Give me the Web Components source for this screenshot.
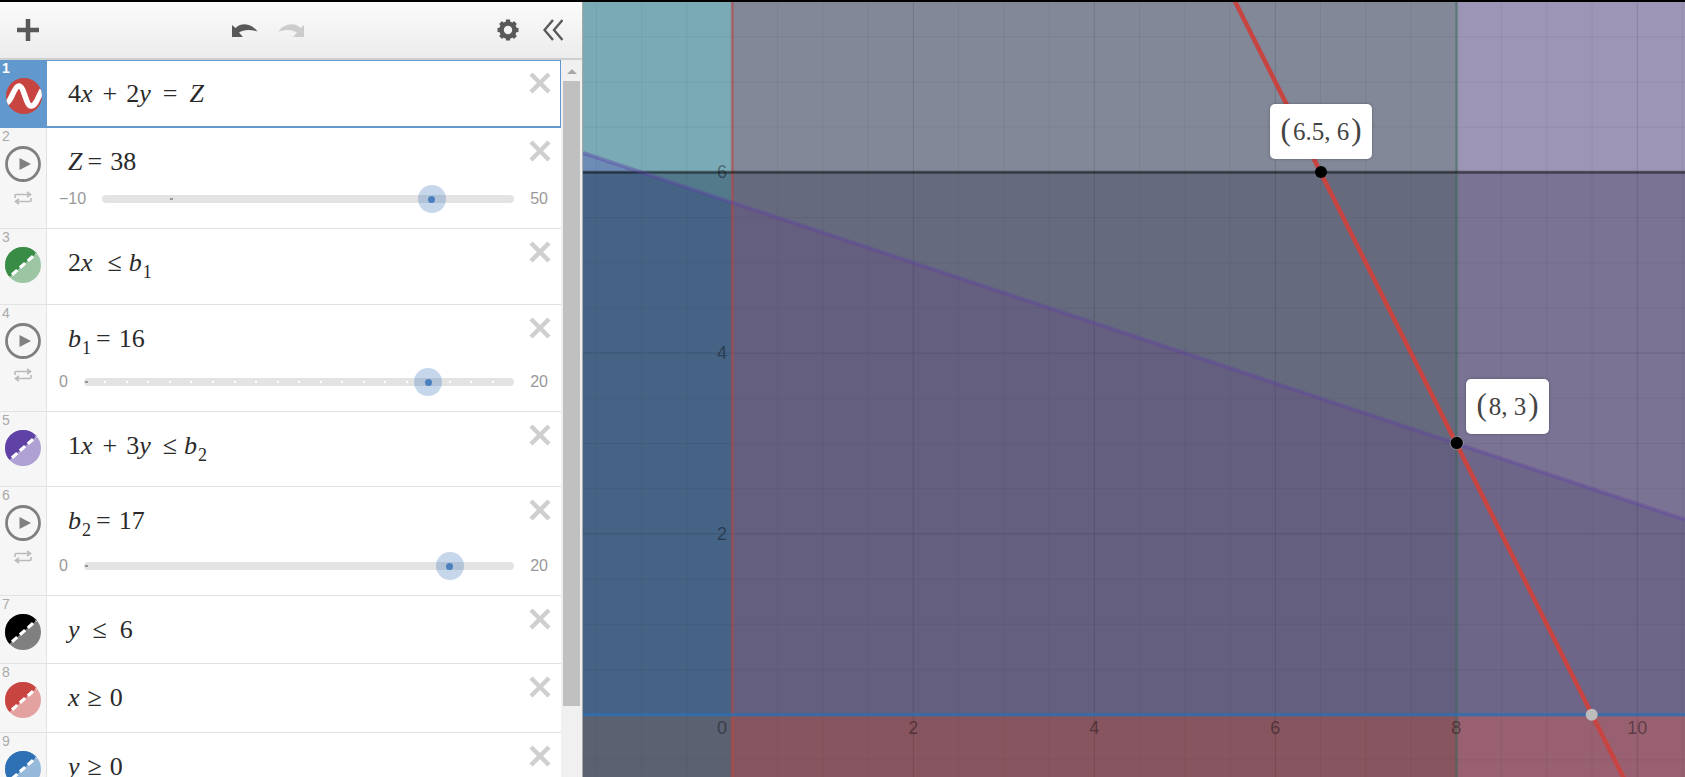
<!DOCTYPE html>
<html lang="en">
<head>
<meta charset="utf-8">
<title>Graph</title>
<style>
  html, body { margin: 0; height: 100%; overflow: hidden; background: #fff; }
</style>
</head>
<body>
<calc-app>
  <calc-toolbar slot="toolbar"></calc-toolbar>
  <calc-expression slot="rows" index="1" icon="wave" color="#c74440" h="68" active>4<i>x</i><span style="margin:0 9px 0 10px">+</span>2<i>y</i><span style="margin:0 12px">=</span><i>Z</i></calc-expression>
  <calc-expression slot="rows" index="2" icon="play" h="101"><i>Z</i><span style="margin:0 8px 0 5px">=</span>38
    <calc-slider slot="slider" min="-10" max="50" value="38"></calc-slider></calc-expression>
  <calc-expression slot="rows" index="3" icon="shade" color="#388c46" light="#9cc6a3" h="76">2<i>x</i><span style="margin:0 7px 0 15px">≤</span><i>b</i><sub>1</sub></calc-expression>
  <calc-expression slot="rows" index="4" icon="play" h="107"><i>b</i><sub>1</sub><span style="margin:0 8px 0 5px">=</span>16
    <calc-slider slot="slider" min="0" max="20" value="16" step="1"></calc-slider></calc-expression>
  <calc-expression slot="rows" index="5" icon="shade" color="#6042a6" light="#afa1d3" h="75">1<i>x</i><span style="margin:0 9px 0 10px">+</span>3<i>y</i><span style="margin:0 7px 0 12px">≤</span><i>b</i><sub>2</sub></calc-expression>
  <calc-expression slot="rows" index="6" icon="play" h="109"><i>b</i><sub>2</sub><span style="margin:0 8px 0 5px">=</span>17
    <calc-slider slot="slider" min="0" max="20" value="17"></calc-slider></calc-expression>
  <calc-expression slot="rows" index="7" icon="shade" color="#000000" light="#808080" h="68"><i>y</i><span style="margin:0 13px">≤</span>6</calc-expression>
  <calc-expression slot="rows" index="8" icon="shade" color="#c74440" light="#e3a2a0" h="69"><i>x</i><span style="margin:0 8px">≥</span>0</calc-expression>
  <calc-expression slot="rows" index="9" icon="shade" color="#2d70b3" light="#96b8d9" h="69"><i>y</i><span style="margin:0 8px">≥</span>0</calc-expression>
  <calc-graph slot="graph">
    <calc-point-label style="left:687px;top:102px;width:102px"><span>(</span>6.5, 6<span>)</span></calc-point-label>
    <calc-point-label style="left:883px;top:377px;width:83px"><span>(</span>8, 3<span>)</span></calc-point-label>
  </calc-graph>
</calc-app>

<script>
// main layout: left panel with the list, graph on the right
class CalcApp extends HTMLElement {
  constructor() {
    super();
    this.attachShadow({ mode: 'open' });
    this.shadowRoot.innerHTML = `
      <style>
        :host { display: flex; flex-direction: column; height: 777px; width: 1685px; overflow: hidden;
                font-family: "Liberation Sans", Arial, sans-serif; }
        .topline { height: 2px; background: #000; flex: none; }
        .main { flex: 1; display: flex; min-height: 0; }
        .panel { width: 582px; flex: none; display: flex; flex-direction: column; border-right: 1px solid #a8a8a8; background: #fff; }
        .list { flex: 1; display: flex; min-height: 0; }
        .rows { width: 561px; flex: none; overflow: hidden; }
        .bar { flex: 1; background: #f0f0f0; display: flex; flex-direction: column; align-items: center; padding: 0 2px; }
        .arrow { width: 0; height: 0; margin: 9px 0 7px; border: 5px solid transparent; border-top: 0; border-bottom: 5px solid #a8a8a8; flex: none; }
        .thumb { width: 17px; height: 625px; background: #c0c0c0; flex: none; }
        .graph { flex: 1; min-width: 0; }
      </style>
      <div class="topline"></div>
      <div class="main">
        <div class="panel">
          <slot name="toolbar"></slot>
          <div class="list">
            <div class="rows"><slot name="rows"></slot></div>
            <div class="bar"><div class="arrow"></div><div class="thumb"></div></div>
          </div>
        </div>
        <div class="graph"><slot name="graph"></slot></div>
      </div>`;
  }
}

class CalcToolbar extends HTMLElement {
  constructor() {
    super();
    this.attachShadow({ mode: 'open' });
    const teeth = [0, 45, 90, 135, 180, 225, 270, 315]
      .map(a => `<line x1="11" y1="3.5" x2="11" y2="0.5" transform="rotate(${a} 11 11)"/>`).join('');
    this.shadowRoot.innerHTML = `
      <style>
        :host { display: flex; flex: none; box-sizing: border-box; height: 58px; align-items: center;
                justify-content: space-between; padding: 0 19px 0 17px;
                background: linear-gradient(#fbfbfb, #ececec); border-bottom: 2px solid #cfcfcf; }
        .group { display: flex; align-items: center; }
        svg { display: block; }
      </style>
      <div class="group">
        <svg width="22" height="22" viewBox="0 0 22 22"><path d="M11 0.5v21M0.5 11h21" stroke="#595959" stroke-width="4.5" stroke-linecap="round"/></svg>
      </div>
      <div class="group" style="gap:20px">
        <svg width="26" height="15" viewBox="0 0 26 15"><path d="M0 2V14H11L7 9.5C11 6.5 18 6 25.500 8.500C21 2 11-2 3.500 5Z" fill="#595959"/></svg>
        <svg width="26" height="15" viewBox="0 0 26 15"><path d="M26 2V14H15L19 9.500C15 6.500 8 6 0.500 8.500C5 2 15-2 22.500 5Z" fill="#cccccc"/></svg>
      </div>
      <div class="group" style="gap:24px">
        <svg width="22" height="22" viewBox="0 0 22 22"><circle cx="11" cy="11" r="6.500" fill="none" stroke="#595959" stroke-width="4.600"/><g stroke="#595959" stroke-width="4.200">${teeth}</g></svg>
        <svg width="20" height="22" viewBox="0 0 20 22"><path d="M10 1L1.500 11L10 21M19.500 1L11 11L19.500 21" fill="none" stroke="#595959" stroke-width="2.400"/></svg>
      </div>`;
  }
}

// one row of the expression list
class CalcExpression extends HTMLElement {
  constructor() {
    super();
    this.attachShadow({ mode: 'open' });
  }

  iconMarkup() {
    const kind = this.getAttribute('icon');
    const color = this.getAttribute('color');
    const light = this.getAttribute('light');
    const id = 'c' + this.getAttribute('index');
    if (kind === 'wave') {
      return `<svg width="36" height="36" viewBox="0 0 36 36"><defs><clipPath id="${id}"><circle cx="18" cy="18" r="18"/></clipPath></defs><circle cx="18" cy="18" r="18" fill="${color}"/>
        <path clip-path="url(#${id})" d="M0 25C5 25 8 8 13 8S20 28 25 28S32 19 36 12" fill="none" stroke="#fff" stroke-width="5.500"/></svg>`;
    }
    if (kind === 'play') {
      return `<svg width="36" height="36" viewBox="0 0 36 36"><circle cx="18" cy="18" r="16.500" fill="none" stroke="#808080" stroke-width="2.800"/>
        <path d="M14.500 12V24L26 18Z" fill="#808080"/></svg>`;
    }
    return `<svg width="36" height="36" viewBox="0 0 36 36"><defs><clipPath id="${id}"><circle cx="18" cy="18" r="18"/></clipPath></defs>
      <g clip-path="url(#${id})"><rect width="36" height="36" fill="${light}"/>
      <path d="M-2 35.600L38 .4V-2H-2Z" fill="${color}"/>
      <path d="M7 27.700L31 6.600" stroke="#fff" stroke-width="3.200" stroke-dasharray="7 3.500"/></g></svg>`;
  }

  connectedCallback() {
    const isPlay = this.getAttribute('icon') === 'play';
    const h = this.getAttribute('h');
    this.shadowRoot.innerHTML = `
      <style>
        :host { display: flex; box-sizing: border-box; height: ${h}px; border-bottom: 1px solid #e2e2e2; position: relative; background: #fff; }
        .gutter { width: 47px; flex: none; box-sizing: border-box; background: #f6f6f6; border-right: 1px solid #e2e2e2;
                  display: flex; flex-direction: column; align-items: center; padding-top: 18px; position: relative; }
        .num { position: absolute; left: 2px; top: 1px; font-size: 14px; line-height: 14px; color: #aaa; }
        .rep { margin-top: 9px; display: block; }
        .body { flex: 1; min-width: 0; box-sizing: border-box; display: flex; flex-direction: column; justify-content: space-between; padding: 19px 0 19px 21px; }
        .math { font: 26px/30px "Liberation Serif", "Times New Roman", serif; color: #2a2a2a; white-space: nowrap; }
        ::slotted(sub) { font-size: 18px; line-height: 0; vertical-align: -7px; margin-left: 1px; }
        ::slotted(calc-slider) { margin-left: -9px; }
        .del { position: absolute; right: 10px; top: 12px; display: block; }
        :host([active]) { border-bottom: 0; }
        :host([active]) .gutter { background: #6199cf; border-right: 0; }
        :host([active]) .num { color: #fff; font-weight: bold; }
        :host([active]) .body { border: solid #6199cf; border-width: 1px 1px 2px 0; padding-top: 18px; }
      </style>
      <div class="gutter">
        <span class="num">${this.getAttribute('index')}</span>
        ${this.iconMarkup()}
        ${isPlay ? `<svg class="rep" width="18" height="14" viewBox="0 0 18 14" fill="none" stroke="#bbb" stroke-width="1.600">
          <path d="M1 7V4.500Q1 3.500 2 3.500H16M13 1L16.500 3.500L13 6M17 7V9.500Q17 10.500 16 10.500H2M5 8L1.500 10.500L5 13"/></svg>` : ''}
      </div>
      <div class="body">
        <div class="math"><slot></slot></div>
        <slot name="slider"></slot>
      </div>
      <svg class="del" width="22" height="22" viewBox="0 0 22 22"><path d="M2 2L20 20M20 2L2 20" stroke="#cfcfcf" stroke-width="4.500"/></svg>`;
  }
}

class CalcSlider extends HTMLElement {
  constructor() {
    super();
    this.attachShadow({ mode: 'open' });
  }

  connectedCallback() {
    const min = Number(this.getAttribute('min'));
    const max = Number(this.getAttribute('max'));
    const value = Number(this.getAttribute('value'));
    const step = Number(this.getAttribute('step') || 0);
    const pct = v => ((v - min) / (max - min)) * 100;
    let ticks = '';
    if (step) {
      for (let v = min + step; v < max; v += step) ticks += `<b class="tick" style="left:${pct(v)}%"></b>`;
    }
    this.shadowRoot.innerHTML = `
      <style>
        :host { display: flex; align-items: center; height: 20px; gap: 16px; padding-right: 13px;
                font: 16px "Liberation Sans", Arial, sans-serif; color: #999; }
        .track { flex: 1; height: 8px; border-radius: 4px; background: #e3e3e3; position: relative; }
        .tick { position: absolute; top: 3px; width: 2px; height: 2px; margin-left: -1px; background: #fff; }
        .zero { position: absolute; top: 3px; width: 3px; height: 2px; margin-left: -1px; background: #999; }
        .thumb { position: absolute; top: 4px; width: 28px; height: 28px; margin: -14px; border-radius: 50%; background: rgba(65,120,190,.3); }
        .thumb::after { content: ""; position: absolute; left: 10.500px; top: 10.500px; width: 7px; height: 7px; border-radius: 50%; background: #4a80c0; }
      </style>
      <span>${min < 0 ? '−' + Math.abs(min) : min}</span>
      <div class="track">${ticks}<b class="zero" style="left:${min < 0 ? pct(0) : 0.5}%"></b><div class="thumb" style="left:${pct(value)}%"></div></div>
      <span>${max}</span>`;
  }
}

// free canvas with the shaded regions. viewBox uses page coordinates
class CalcGraph extends HTMLElement {
  constructor() {
    super();
    this.attachShadow({ mode: 'open' });
    const X = v => 732.3 + v * 90.5;
    const Y = v => 714.7 - v * 90.4;
    let grid = '';
    for (let i = -4; i <= 22; i++) {
      const o = i % 4 === 0 ? .13 : .05;
      grid += `<line x1="${X(i / 2)}" x2="${X(i / 2)}" y1="0" y2="777" stroke="#000" stroke-opacity="${o}"/>`;
    }
    for (let i = -2; i <= 16; i++) {
      const o = i % 4 === 0 ? .13 : .05;
      grid += `<line y1="${Y(i / 2)}" y2="${Y(i / 2)}" x1="583" x2="1685" stroke="#000" stroke-opacity="${o}"/>`;
    }
    const labels = [2, 4, 6, 8, 10]
      .map(v => `<text x="${X(v)}" y="734" text-anchor="middle">${v}</text>`).join('')
      + [2, 4, 6].map(v => `<text x="722" y="${Y(v) + 6}" text-anchor="middle">${v}</text>`).join('')
      + `<text x="722" y="734" text-anchor="middle">0</text>`;
    this.shadowRoot.innerHTML = `
      <style>
        :host { display: block; position: relative; height: 775px; overflow: hidden; background: #828898; }
        svg { display: block; position: absolute; left: 0; top: 0; }
        text { font: 18px "Liberation Sans", Arial, sans-serif; fill: #000; fill-opacity: .4; }
      </style>
      <svg width="1102" height="775" viewBox="583 2 1102 775">
        <!-- y > 6 -->
        <rect x="583" y="0" width="149.300" height="172.300" fill="#7aaab6"/>
        <path d="M583 152.800L641.800 172.300H583Z" fill="#6c8cb6"/>
        <rect x="732.300" y="0" width="724.400" height="172.300" fill="#828898"/>
        <rect x="1456.700" y="0" width="229" height="172.300" fill="#9c95b6"/>
        <!-- 0 < y < 6 -->
        <rect x="583" y="172.300" width="149.300" height="542.400" fill="#527a8a"/>
        <path d="M583 172.300H641.800L732.300 202.400V714.700H583Z" fill="#456385"/>
        <rect x="732.300" y="172.300" width="724.400" height="542.400" fill="#666a7e"/>
        <path d="M732.300 202.400L1456.700 443.500V714.700H732.300Z" fill="#655f7f"/>
        <rect x="1456.700" y="172.300" width="229" height="542.400" fill="#7b7394"/>
        <path d="M1456.700 443.500L1685 519.700V714.700H1456.700Z" fill="#6e6689"/>
        <!-- y < 0 -->
        <rect x="583" y="714.700" width="149.300" height="63" fill="#5b6170"/>
        <rect x="732.300" y="714.700" width="724.400" height="63" fill="#87555f"/>
        <rect x="1456.700" y="714.700" width="229" height="63" fill="#986070"/>
        ${grid}
        <line x1="732.300" x2="732.300" y1="0" y2="777" stroke="#c74440" stroke-width="3" stroke-opacity=".5"/>
        <line x1="1456.700" x2="1456.700" y1="0" y2="777" stroke="#2f6f50" stroke-width="3" stroke-opacity=".35"/>
        <line x1="583" x2="1685" y1="172.300" y2="172.300" stroke="#000" stroke-width="3" stroke-opacity=".45"/>
        <line x1="583" x2="1685" y1="714.700" y2="714.700" stroke="#2d70b3" stroke-width="3" stroke-opacity=".85"/>
        <line x1="583" x2="1685" y1="152.800" y2="519.700" stroke="#6042a6" stroke-width="4" stroke-opacity=".4"/>
        ${labels}
        <line x1="${X(5.5)}" y1="${Y(8)}" x2="${X(9.9)}" y2="${Y(-0.8)}" stroke="#c74440" stroke-width="4.500"/>
        <circle cx="1321" cy="172" r="6" fill="#000"/>
        <circle cx="1456.700" cy="443" r="6.500" fill="#000" stroke="#fff" stroke-opacity=".35"/>
        <circle cx="1591.700" cy="714.700" r="6" fill="#bdbdbd"/>
      </svg>
      <slot></slot>`;
  }
}

class CalcPointLabel extends HTMLElement {
  constructor() {
    super();
    this.attachShadow({ mode: 'open' });
    this.shadowRoot.innerHTML = `
      <style>
        :host { position: absolute; display: flex; align-items: center; justify-content: center; box-sizing: border-box; height: 55px;
                background: #fff; border-radius: 5px; box-shadow: 0 0 3px rgba(0,0,0,.3); white-space: pre;
                font: 25px "Liberation Serif", "Times New Roman", serif; color: #444; }
        ::slotted(span) { font-size: 31px; line-height: 1; position: relative; top: -2px; margin: 0 2px; }
      </style>
      <slot></slot>`;
  }
}

customElements.define('calc-app', CalcApp);
customElements.define('calc-toolbar', CalcToolbar);
customElements.define('calc-expression', CalcExpression);
customElements.define('calc-slider', CalcSlider);
customElements.define('calc-graph', CalcGraph);
customElements.define('calc-point-label', CalcPointLabel);
</script>
</body>
</html>
